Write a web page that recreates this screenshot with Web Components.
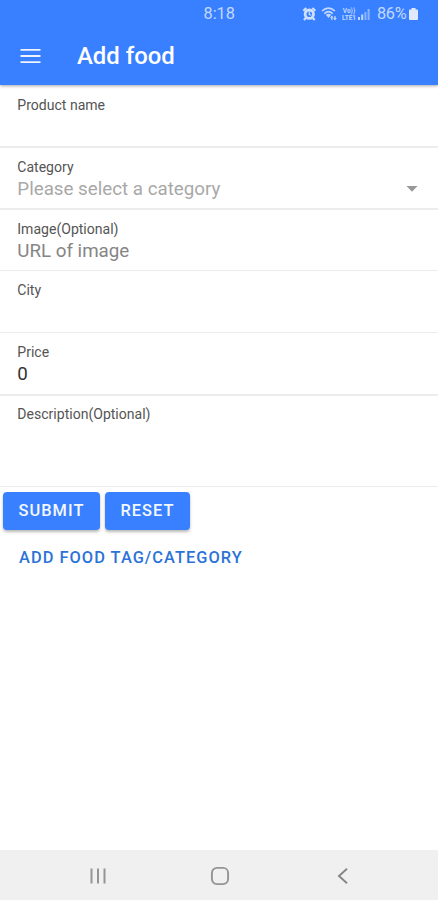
<!DOCTYPE html>
<html lang="en">
<head>
<meta charset="utf-8">
<title>Add food</title>
<style>
body{margin:0;background:#fff;font-family:Roboto,"Liberation Sans",sans-serif;overflow:hidden}
</style>
</head>
<body>
<food-app></food-app>
<script>
const define = (name, html) => customElements.define(name, class extends HTMLElement {
  constructor() {
    super();
    this.attachShadow({mode: 'open'}).innerHTML = html;
  }
});

define('status-bar', `
<style>
:host{display:grid;grid-template-columns:203.5px 98.5px 1fr;height:28px;align-items:center;color:#c3d8ff;font-size:16.3px;line-height:28px}
.icons{display:flex;align-items:center;height:28px}
svg{display:block;flex:none;margin-top:-1px}
.net{font:700 6.5px/8px Roboto,sans-serif;width:16px;margin:0 0 0 3px;text-align:center;white-space:nowrap}
.net span{display:block}
.net span+span{margin-top:-1px}
.pct{margin-left:6px;width:31px;white-space:nowrap;letter-spacing:-.3px}
</style>
<span></span><span class="time">8:18</span>
<div class="icons">
<svg width="15" height="16" viewBox="0 0 15 16" fill="none" stroke="#d0e0ff"><circle cx="7.3" cy="8.2" r="4.2" stroke-width="2.8"/><path d="M1.3 4.8 4.3 2M13.3 4.8 10.3 2M3.8 12l-1.9 2M10.8 12l1.9 2" stroke-width="2.2"/><path d="M7.3 5.5v3l2 .7" stroke-width="1.2"/></svg>
<svg style="margin-left:4px" width="17" height="16" viewBox="0 0 17 16" fill="none" stroke="#c3d8ff" stroke-width="1.6"><path d="M1 5Q7.5-.8 14 5M3.3 7.6Q7.5 3.6 11.7 7.6"/><path d="M4.8 8.8Q7.5 6.8 10.2 8.8L7.5 12Z" fill="#c3d8ff" stroke="none"/><path d="M10.8 14v-3.2M14 10v3.2" stroke-width="1.3"/><path d="m9 11.8 1.8-2.4 1.8 2.4ZM12.2 12l1.8 2.4 1.8-2.4Z" fill="#c3d8ff" stroke="none"/></svg>
<div class="net"><span>Vo))</span><span>LTE1</span></div>
<svg width="14" height="14" viewBox="0 0 14 14" fill="#c3d8ff"><path d="M1 10h2v3H1zM4.2 7.5h2V13h-2z"/><path d="M7.4 5h2v8h-2zM10.6 2h2v11h-2z" opacity=".6"/></svg>
<span class="pct">86%</span>
<svg width="11" height="14" viewBox="0 0 11 14" fill="#e0eaff"><path d="M3.5 1h4v1.5H9q1 0 1 1V12q0 1-1 1H2q-1 0-1-1V3.5q0-1 1-1h1.5z"/></svg>
</div>`);

define('app-toolbar', `
<style>
:host{display:flex;align-items:center;height:57px;padding-left:20px;color:#fff}
svg{flex:none;display:block;margin-bottom:2px}
h1{margin:0 0 0 36px;font-size:23.9px;font-weight:500;line-height:54px;padding-bottom:2px;white-space:nowrap}
</style>
<svg width="21" height="16" viewBox="0 0 21 16"><path d="M.5 1.8h20M.5 8h20M.5 14.2h20" stroke="#eef4ff" stroke-width="1.8"/></svg>
<h1><slot></slot></h1>`);

define('form-field', `
<style>
:host{display:flex;flex-direction:column;box-sizing:border-box;height:62px;border-bottom:2px solid #ececec;padding:10px 17px 0 17.3px}
label{font-size:14.05px;line-height:18px;color:#555;white-space:nowrap}
.value{display:flex;justify-content:space-between;align-items:center;height:27px;font-size:18.75px;line-height:27px;color:var(--value,#858585);white-space:nowrap}
</style>
<label><slot name="label"></slot></label><div class="value"><slot></slot></div>`);

define('drop-arrow', `
<style>:host{display:block;width:12px;height:6px;margin:0 3px 2px 0}svg{display:block}</style>
<svg width="12" height="6" viewBox="0 0 12 6"><path d="M.5 0h11L6 5.8z" fill="#999"/></svg>`);

define('md-button', `
<style>
:host{display:block}
button{display:block;border:0;border-radius:4px;margin:0;padding:0;width:100%;height:38px;background:#3880ff;color:#f4f8ff;font:500 16.4px/38px Roboto,sans-serif;letter-spacing:1.03px;text-transform:uppercase;box-shadow:0 2px 3px rgba(0,0,0,.28);white-space:nowrap}
:host([clear]) button{background:none;color:#2b73d8;box-shadow:none;text-align:left}
</style>
<button><slot></slot></button>`);

define('nav-bar', `
<style>
:host{display:grid;grid-template-columns:repeat(3,122.5px);padding-left:36.5px;height:50px;background:#f0f0f0;align-items:center;justify-items:center}
svg{display:block;margin-top:1px}
</style>
<svg width="18" height="18" viewBox="0 0 18 18" fill="none" stroke="#949494" stroke-width="2"><path d="M2.5 1.5v15M9 1.5v15M15.5 1.5v15"/></svg>
<svg width="20" height="20" viewBox="0 0 20 20" fill="none" stroke="#949494" stroke-width="1.9"><rect x="1.9" y="1.9" width="16.2" height="16.2" rx="5"/></svg>
<svg width="12" height="18" viewBox="0 0 12 18" fill="none" stroke="#858585" stroke-width="1.9"><path d="M10 1.8 2 9l8 7.2"/></svg>`);

define('food-app', `
<style>
:host{display:flex;flex-direction:column;width:438px;height:900px;background:#fff}
header{height:85px;background:#3880ff;box-shadow:0 1px 3px rgba(0,0,0,.35)}
main{flex:1}
.first{padding-top:11px;height:63px}
.desc{height:91px;padding-top:9px;border-bottom-width:1px}
.actions{display:flex;gap:5px;padding:5px 3px 0}
.link{padding:9px 0 0 19px}
</style>
<header><status-bar></status-bar><app-toolbar>Add food</app-toolbar></header>
<main>
<form-field class="first"><span slot="label">Product name</span></form-field>
<form-field style="--value:#a8a8a8"><span slot="label">Category</span><span>Please select a category</span><drop-arrow></drop-arrow></form-field>
<form-field style="height:61px;border-bottom-width:1px"><span slot="label">Image(Optional)</span>URL of image</form-field>
<form-field style="border-bottom-width:1px"><span slot="label">City</span></form-field>
<form-field style="--value:#333;height:63px"><span slot="label">Price</span>0</form-field>
<form-field class="desc"><span slot="label">Description(Optional)</span></form-field>
<div class="actions"><md-button style="width:97px">Submit</md-button><md-button style="width:85px">Reset</md-button></div>
<div class="link"><md-button clear>Add food tag/category</md-button></div>
</main>
<nav-bar></nav-bar>`);
</script>
</body>
</html>
